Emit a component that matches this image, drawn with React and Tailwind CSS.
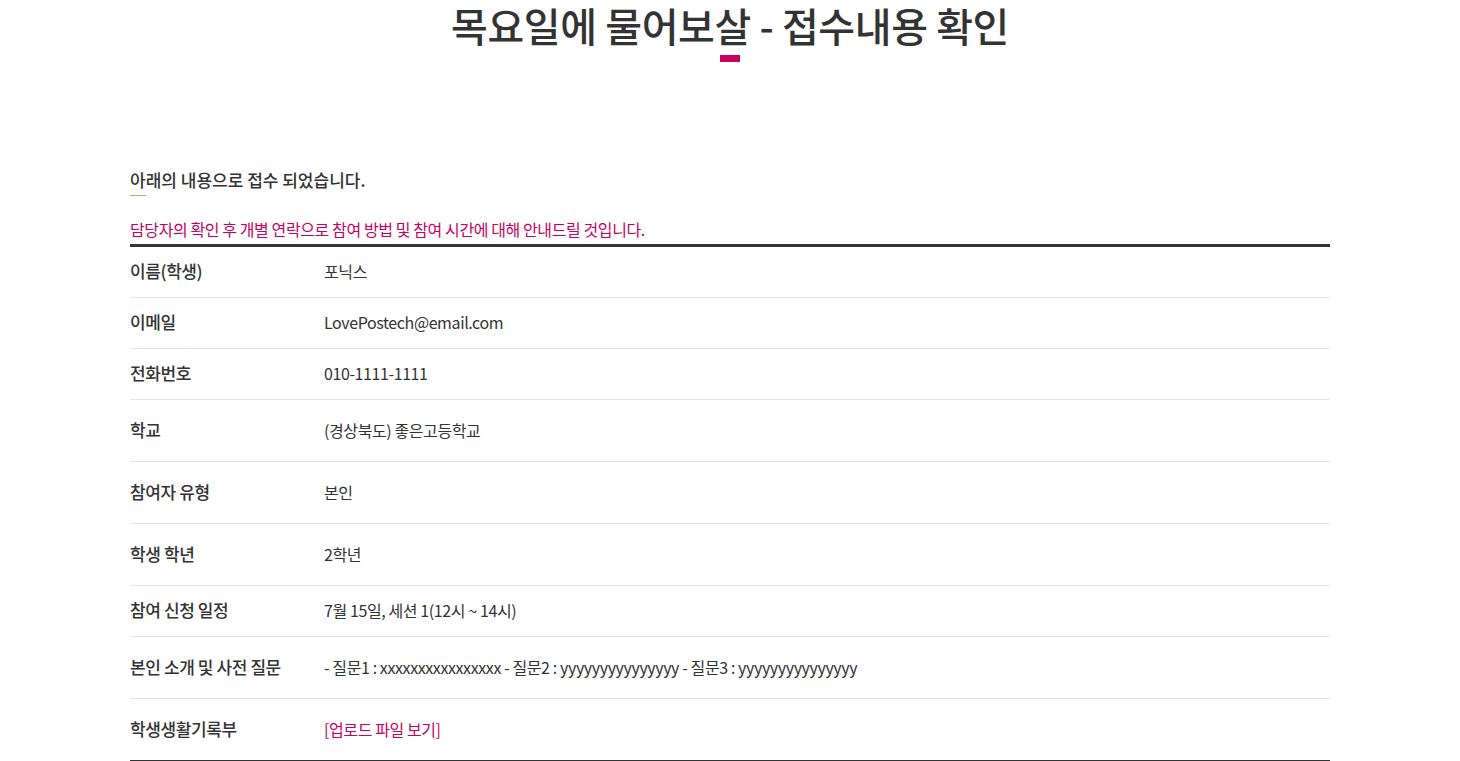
export default function App() {
  const rows = [
    { label: "이름(학생)", value: "포닉스", h: "h-[51px]" },
    { label: "이메일", value: "LovePostech@email.com", h: "h-[51px]" },
    { label: "전화번호", value: "010-1111-1111", h: "h-[51px]" },
    { label: "학교", value: "(경상북도) 좋은고등학교", h: "h-[62px]" },
    { label: "참여자 유형", value: "본인", h: "h-[62px]" },
    { label: "학생 학년", value: "2학년", h: "h-[62px]" },
    { label: "참여 신청 일정", value: "7월 15일, 세션 1(12시 ~ 14시)", h: "h-[51px]" },
    { label: "본인 소개 및 사전 질문", value: "- 질문1 : xxxxxxxxxxxxxxxx - 질문2 : yyyyyyyyyyyyyyy - 질문3 : yyyyyyyyyyyyyyy", h: "h-[62px]" },
    { label: "학생생활기록부", value: "[업로드 파일 보기]", h: "h-[61px]", link: true },
  ];
  return (
    <div className="w-[1460px] min-h-[761px] bg-white text-[#333] font-['Noto_Sans_CJK_KR','Noto_Sans',sans-serif]">
      <div className="flex flex-col items-center">
        <h1 className="text-[40px] leading-[50px] font-medium text-[#333] tracking-[-0.4px]">목요일에 물어보살 - 접수내용 확인</h1>
        <div className="mt-[5px] w-[20px] h-[7px] bg-[#c8005f]" />
      </div>
      <div className="w-[1200px] mx-auto mt-[106px]">
        <p className="text-[17px] leading-[24px] font-medium text-[#333]">아래의 내용으로 접수 되었습니다.</p>
        <div className="mt-[3px] w-[16px] h-px bg-[#b9a98f]" />
        <p className="mt-[22px] text-[16px] leading-[22px] text-[#c8005f] tracking-[-0.4px]">담당자의 확인 후 개별 연락으로 참여 방법 및 참여 시간에 대해 안내드릴 것입니다.</p>
        <div className="mt-[4px] border-t-[3px] border-[#333] border-b border-b-[#333]">
          {rows.map((r, i) => (
            <div key={i} className={`flex items-center pb-[2px] ${r.h} ${i < rows.length - 1 ? "border-b border-[#e5e5e5]" : ""}`}>
              <div className="w-[194px] text-[17px] font-medium tracking-[-0.4px] text-[#333]">{r.label}</div>
              <div className={`text-[16px] tracking-[-0.4px] ${r.link ? "text-[#c8005f]" : "text-[#333]"}`}>{r.value}</div>
            </div>
          ))}
        </div>
      </div>
    </div>
  );
}
